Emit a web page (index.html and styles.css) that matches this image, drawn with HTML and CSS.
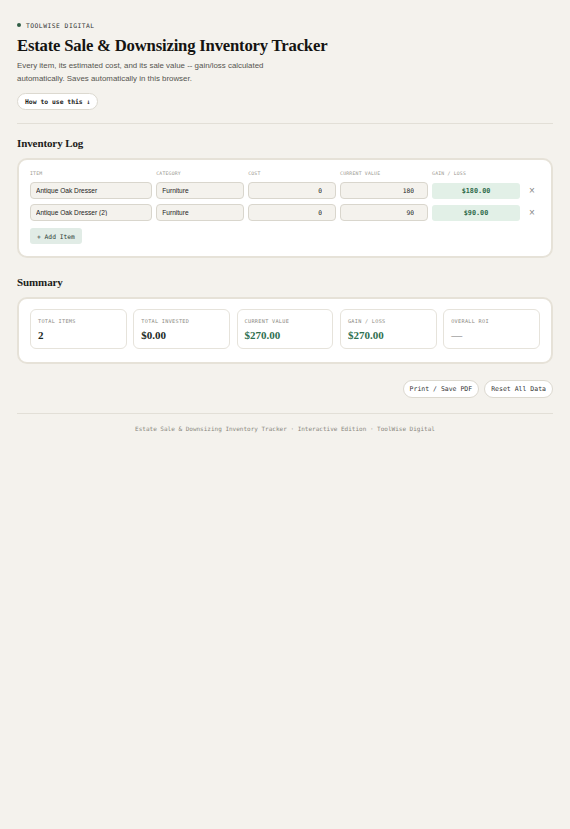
FILE: index.html
```html
<!DOCTYPE html>
<html>
<head>
    <title>Estate Sale &amp; Downsizing Inventory Tracker</title>
    <link rel="stylesheet" href="styles.css">
</head>
<body>
    <div class="eyebrow"><span class="dot"></span>TOOLWISE DIGITAL</div>
    <h1>Estate Sale &amp; Downsizing Inventory Tracker</h1>
    <p class="intro">Every item, its estimated cost, and its sale value -- gain/loss calculated automatically. Saves automatically in this browser.</p>
    <button class="pill pill-bold">How to use this &darr;</button>

    <hr>

    <h2>Inventory Log</h2>
    <div class="card">
        <div class="log-grid">
            <div class="col-head">Item</div>
            <div class="col-head">Category</div>
            <div class="col-head">Cost</div>
            <div class="col-head">Current Value</div>
            <div class="col-head">Gain / Loss</div>
            <div></div>

            <input class="field" type="text" value="Antique Oak Dresser">
            <input class="field" type="text" value="Furniture">
            <input class="field num" type="text" value="0">
            <input class="field num" type="text" value="180">
            <div class="gain">$180.00</div>
            <span class="remove">&times;</span>

            <input class="field" type="text" value="Antique Oak Dresser (2)">
            <input class="field" type="text" value="Furniture">
            <input class="field num" type="text" value="0">
            <input class="field num" type="text" value="90">
            <div class="gain">$90.00</div>
            <span class="remove">&times;</span>
        </div>
        <button class="add-btn">+ Add Item</button>
    </div>

    <h2>Summary</h2>
    <div class="card summary">
        <div class="stat">
            <div class="stat-label">Total Items</div>
            <div class="stat-value">2</div>
        </div>
        <div class="stat">
            <div class="stat-label">Total Invested</div>
            <div class="stat-value">$0.00</div>
        </div>
        <div class="stat">
            <div class="stat-label">Current Value</div>
            <div class="stat-value green">$270.00</div>
        </div>
        <div class="stat">
            <div class="stat-label">Gain / Loss</div>
            <div class="stat-value green">$270.00</div>
        </div>
        <div class="stat">
            <div class="stat-label">Overall ROI</div>
            <div class="stat-value muted">&mdash;</div>
        </div>
    </div>

    <div class="actions">
        <button class="pill">Print / Save PDF</button>
        <button class="pill">Reset All Data</button>
    </div>

    <hr class="foot-rule">
    <p class="footer">Estate Sale &amp; Downsizing Inventory Tracker &middot; Interactive Edition &middot; ToolWise Digital</p>
</body>
</html>
```

FILE: styles.css
```css
body {
    font-family: "Liberation Sans", Arial, sans-serif;
    background-color: #f4f2ed;
    color: #1c1c1a;
    margin: 0;
    padding: 21px 17px 40px;
}

.eyebrow {
    display: flex;
    align-items: center;
    gap: 5px;
    height: 8px;
    font-family: "DejaVu Sans Mono", monospace;
    font-size: 6.3px;
    letter-spacing: 0.5px;
    color: #333;
}

.dot {
    width: 4px;
    height: 4px;
    border-radius: 50%;
    background-color: #2f5e45;
}

h1 {
    font-family: "Liberation Serif", "Times New Roman", serif;
    font-size: 16.7px;
    line-height: 20px;
    letter-spacing: -0.2px;
    font-weight: bold;
    margin: 7px 0 4px;
    color: #141412;
}

.intro {
    font-size: 7.9px;
    line-height: 12.5px;
    color: #55544f;
    max-width: 262px;
    margin: 0 0 8px;
}

.pill {
    font-family: "DejaVu Sans Mono", monospace;
    font-size: 6.4px;
    color: #333;
    background-color: #fff;
    border: 1px solid #dcd9d0;
    border-radius: 10px;
    padding: 0 7px;
    height: 18px;
    cursor: pointer;
}

.pill-bold {
    display: block;
    font-weight: bold;
    color: #222;
    height: 17px;
}

hr {
    border: none;
    border-top: 1px solid #e2dfd7;
    margin: 13px 0 0;
}

h2 {
    font-family: "Liberation Serif", "Times New Roman", serif;
    font-size: 11px;
    line-height: 14px;
    letter-spacing: -0.1px;
    font-weight: bold;
    margin: 0 0 8px;
}

hr + h2 {
    margin-top: 12px;
}

.card {
    background-color: #fff;
    border: 2px solid #e6e2d8;
    border-radius: 10px;
    padding: 11px 11px 12px;
    margin-bottom: 17px;
}

.log-grid {
    display: grid;
    grid-template-columns: 1.39fr 1fr 1fr 1fr 1fr 16px;
    column-gap: 4px;
    row-gap: 5px;
    align-items: center;
}

.col-head {
    font-family: "DejaVu Sans Mono", monospace;
    font-size: 4.8px;
    line-height: 6px;
    color: #9a9890;
    text-transform: uppercase;
    letter-spacing: 0.2px;
}

.field {
    font-family: "Liberation Sans", Arial, sans-serif;
    font-size: 6.6px;
    color: #222;
    background-color: #f4f2ed;
    border: 1px solid #d9d6cd;
    border-radius: 4px;
    height: 17px;
    padding: 0 5px;
    box-sizing: border-box;
    width: 100%;
    min-width: 0;
}

.field.num {
    font-family: "DejaVu Sans Mono", monospace;
    font-size: 6.3px;
    text-align: right;
    padding-right: 13px;
}

.gain {
    font-family: "DejaVu Sans Mono", monospace;
    font-size: 6.8px;
    font-weight: bold;
    color: #2f6b4c;
    background-color: #e2f0e7;
    border-radius: 3px;
    height: 16px;
    line-height: 16px;
    text-align: center;
}

.remove {
    color: #888;
    font-size: 10px;
    text-align: center;
    cursor: pointer;
}

.add-btn {
    font-family: "DejaVu Sans Mono", monospace;
    font-size: 6.3px;
    color: #2a3a33;
    background-color: #e1ece6;
    border: none;
    border-radius: 3px;
    height: 16px;
    padding: 0 7px;
    margin-top: 7px;
    cursor: pointer;
}

.summary {
    display: grid;
    grid-template-columns: repeat(5, 1fr);
    gap: 6.5px;
    padding: 10px 11px 13px;
    margin-bottom: 16px;
}

.stat {
    border: 1px solid #e6e3db;
    border-radius: 6px;
    padding: 8px 7px 0;
    height: 40px;
    box-sizing: border-box;
}

.stat-label {
    font-family: "DejaVu Sans Mono", monospace;
    font-size: 5.2px;
    line-height: 6px;
    color: #8c8a83;
    text-transform: uppercase;
    letter-spacing: 0.3px;
}

.stat-value {
    font-family: "Liberation Serif", "Times New Roman", serif;
    font-size: 11px;
    line-height: 14px;
    font-weight: bold;
    color: #1c2a25;
    margin-top: 4px;
}

.stat-value.green {
    color: #2f7050;
}

.stat-value.muted {
    color: #777;
    font-weight: normal;
}

.actions {
    display: flex;
    justify-content: flex-end;
    gap: 5px;
}

.actions .pill {
    font-size: 6.5px;
    padding: 0 6px;
}

.foot-rule {
    margin-top: 15px;
}

.footer {
    font-family: "DejaVu Sans Mono", monospace;
    font-size: 6px;
    line-height: 8px;
    color: #8a8880;
    text-align: center;
    margin: 11px 0 0;
}
```
